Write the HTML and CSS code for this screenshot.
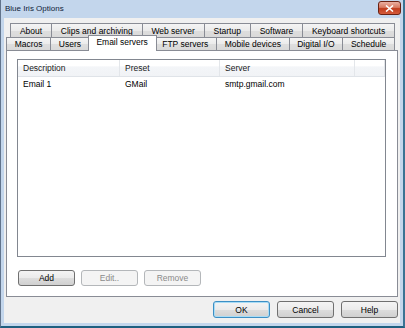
FILE: index.html
```html
<!DOCTYPE html>
<html lang="en">
<head>
    <meta charset="UTF-8">
    <title>Blue Iris Options</title>
    <link rel="stylesheet" href="styles.css">
</head>
<body>
    <div class="window">
        <div class="titlebar">
            <span class="title">Blue Iris Options</span>
            <span class="close-btn">
                <svg width="9" height="7" viewBox="0 0 9 7">
                    <path d="M1,0.5 L8,6.5 M8,0.5 L1,6.5" stroke="#fff" stroke-width="1.6" fill="none" />
                </svg>
            </span>
        </div>

        <div class="client">
            <div class="tabs">
                <div class="tab-row back-row">
                    <div class="tab">About</div>
                    <div class="tab">Clips and archiving</div>
                    <div class="tab">Web server</div>
                    <div class="tab">Startup</div>
                    <div class="tab">Software</div>
                    <div class="tab">Keyboard shortcuts</div>
                </div>
                <div class="tab-row front-row">
                    <div class="tab">Macros</div>
                    <div class="tab">Users</div>
                    <div class="tab selected">Email servers</div>
                    <div class="tab">FTP servers</div>
                    <div class="tab">Mobile devices</div>
                    <div class="tab">Digital I/O</div>
                    <div class="tab">Schedule</div>
                </div>

                <div class="tab-panel">
                    <div class="listview">
                        <div class="lv-header">
                            <div class="col col-desc">Description</div>
                            <div class="col col-preset">Preset</div>
                            <div class="col col-server">Server</div>
                            <div class="col col-fill"></div>
                        </div>
                        <div class="lv-row">
                            <div class="col col-desc">Email 1</div>
                            <div class="col col-preset">GMail</div>
                            <div class="col col-server">smtp.gmail.com</div>
                        </div>
                    </div>
                    <div class="panel-buttons">
                        <button class="btn">Add</button>
                        <button class="btn" disabled>Edit..</button>
                        <button class="btn" disabled>Remove</button>
                    </div>
                </div>
            </div>

            <div class="dialog-buttons">
                <button class="btn default">OK</button>
                <button class="btn">Cancel</button>
                <button class="btn">Help</button>
            </div>
        </div>
    </div>
</body>
</html>
```

FILE: styles.css
```css
body {
    margin: 0;
    font-family: 'Liberation Sans', Arial, sans-serif;
    font-size: 8.5px;
    color: #000;
    background-color: #c3d6ec;
}

.window {
    width: 405px;
    height: 328px;
    box-sizing: border-box;
    display: flex;
    flex-direction: column;
    padding: 0 3px 3px 3px;
    background-color: #c3d6ec;
    border-left: 1px solid #62748c;
    border-right: 2px solid #3a7394;
    border-bottom: 2px solid #1f5f80;
}

/* title bar */
.titlebar {
    height: 18px;
    display: flex;
    align-items: center;
    justify-content: space-between;
    padding-left: 1px;
}

.title {
    font-size: 8px;
    color: #10223a;
    margin-top: -1px;
}

.close-btn {
    width: 21px;
    height: 12px;
    margin-right: -1px;
    margin-top: -2px;
    display: flex;
    align-items: center;
    justify-content: center;
    border: 1px solid #6b2213;
    border-radius: 3px;
    background: linear-gradient(#eab0a2 0%, #d87a62 45%, #c13d1e 55%, #d55c3c 100%);
}

/* client area */
.client {
    flex: 1;
    display: flex;
    flex-direction: column;
    padding: 5px 2px 5px 2px;
    background-color: #f0f0f0;
}

.tabs {
    flex: 1;
    display: flex;
    flex-direction: column;
}

.tab-row {
    display: flex;
    margin-right: 3px;
}

.back-row {
    height: 14px;
    margin-left: 4px;
}

.front-row {
    height: 13px;
    position: relative;
    z-index: 1;
}

.tab {
    flex: 1 1 auto;
    display: flex;
    align-items: center;
    justify-content: center;
    white-space: nowrap;
    border: 1px solid #898c95;
    border-bottom: none;
    margin-left: -1px;
    background: linear-gradient(#f4f4f4 0%, #ebebeb 50%, #dedede 51%, #d9d9d9 100%);
}

.tab:first-child {
    margin-left: 0;
}

.tab.selected {
    background: #fff;
    margin: -2px -2px -1px -2px;
    padding-bottom: 3px;
    position: relative;
    z-index: 2;
}

.tab-panel {
    flex: 1;
    display: flex;
    flex-direction: column;
    padding: 8px 11px 10px 10px;
    background-color: #fff;
    border: 1px solid #898c95;
}

/* list view */
.listview {
    flex: 1;
    border: 1px solid #828790;
    background-color: #fff;
}

.lv-header {
    display: flex;
    height: 16px;
    border-bottom: 1px solid #dfe3e8;
    background: linear-gradient(#ffffff 0%, #ffffff 40%, #f3f5f8 41%, #f1f3f6 100%);
}

.lv-header .col {
    border-right: 1px solid #e3e6ea;
    color: #1a1a1a;
}

.lv-row {
    display: flex;
    height: 14px;
}

.col {
    display: flex;
    align-items: center;
    box-sizing: border-box;
    padding-left: 5px;
    white-space: nowrap;
}

.col-desc {
    width: 102px;
}

.col-preset {
    width: 100px;
}

.col-server {
    width: 135px;
}

.col-fill {
    flex: 1;
}

/* buttons */
.btn {
    width: 57px;
    height: 16px;
    padding: 0;
    font-family: inherit;
    font-size: 8.5px;
    color: #000;
    border: 1px solid #707070;
    border-radius: 3px;
    background: linear-gradient(#f4f4f4 0%, #ebebeb 50%, #dddddd 51%, #d0d0d0 100%);
}

.btn:disabled {
    color: #8a8a8a;
    border-color: #b4b7ba;
    background: #f4f4f4;
}

.btn.default {
    border-color: #3c8fc4;
    box-shadow: inset 0 0 0 1px #a9dcf5;
}

.panel-buttons {
    display: flex;
    gap: 6px;
    margin-top: 13px;
    padding-left: 1px;
}

.dialog-buttons {
    display: flex;
    justify-content: flex-end;
    gap: 7px;
    margin-top: 4px;
}

.dialog-buttons .btn {
    height: 17px;
}
```
